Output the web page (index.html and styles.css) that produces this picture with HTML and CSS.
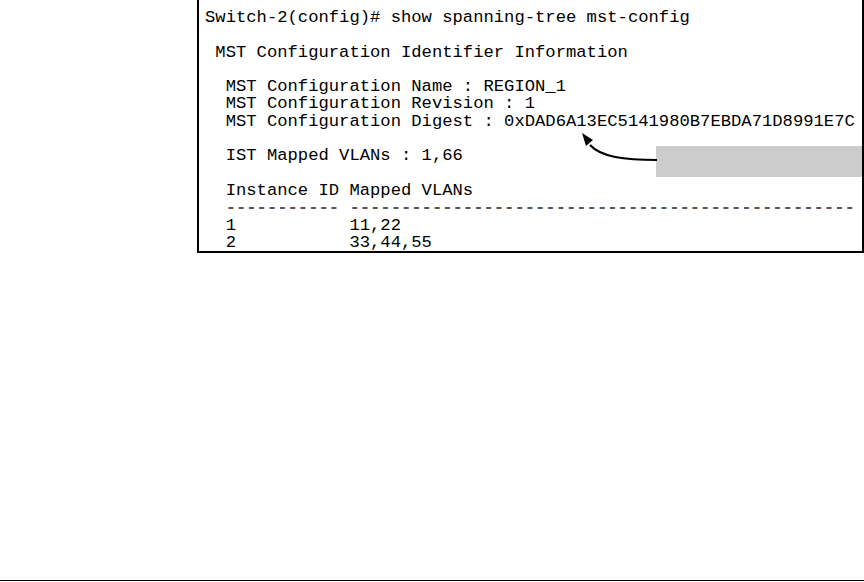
FILE: index.html
```html
<!DOCTYPE html>
<html>
<head>
<meta charset="utf-8">
<link rel="stylesheet" href="styles.css">
</head>
<body>
<div class="page">
  <div class="figure">
    <div class="terminal">
<pre class="screen">Switch-2(config)# show spanning-tree mst-config

 MST Configuration Identifier Information

  MST Configuration Name : REGION_1
  MST Configuration Revision : 1
  MST Configuration Digest : 0xDAD6A13EC5141980B7EBDA71D8991E7C

  IST Mapped VLANs : 1,66

  Instance ID Mapped VLANs
<span class="dash">  ----------- -------------------------------------------------</span>
  1           11,22
  2           33,44,55</pre>
      <div class="callout"></div>
    </div>
  </div>
  <div class="rule"></div>
  <svg class="arrow" width="864" height="582" viewBox="0 0 864 582">
    <path d="M657,160 C624,160 601,157 590,145" fill="none" stroke="#000" stroke-width="2.2"/>
    <polygon points="582,133 593,140 586,146" fill="#000"/>
  </svg>
</div>
</body>
</html>
```
FILE: styles.css
```css
html, body {
  margin: 0;
  padding: 0;
  background: #fff;
}
.page {
  position: relative;
  width: 864px;
  height: 582px;
  display: flex;
  flex-direction: column;
  overflow: hidden;
}
.figure {
  padding-left: 197px;
}
.terminal {
  position: relative;
  box-sizing: border-box;
  width: 667px;
  height: 253px;
  border: 2px solid #000;
  border-top: none;
  padding: 9px 0 0 6px;
  overflow: hidden;
}
.screen {
  margin: 0;
  font-family: "Liberation Mono", monospace;
  font-size: 17.2px;
  line-height: 17.3px;
  color: #000;
  white-space: pre;
}
.dash {
  color: #555;
  font-weight: bold;
}
.callout {
  position: absolute;
  left: 457px;
  top: 146px;
  width: 206px;
  height: 31px;
  background: #cccccc;
}
.rule {
  margin-top: auto;
  margin-bottom: 1px;
  height: 1px;
  background: #000;
}
.arrow {
  position: absolute;
  left: 0;
  top: 0;
  pointer-events: none;
}
```
